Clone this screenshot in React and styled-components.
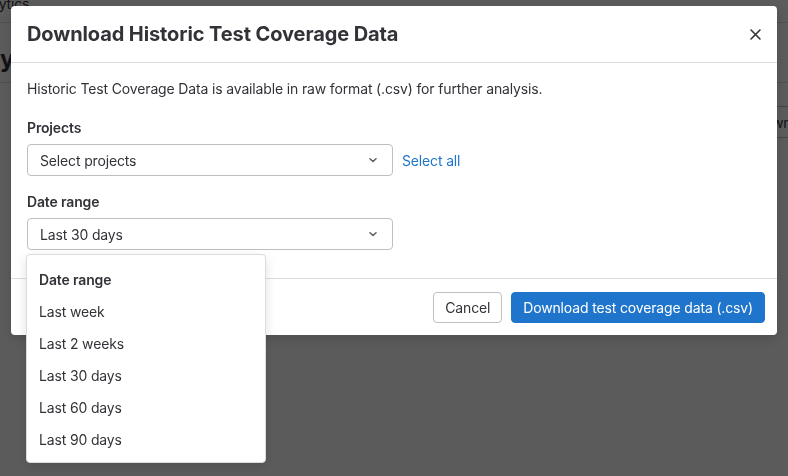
import React, { useState } from 'react';
import styled, { createGlobalStyle } from 'styled-components';

const GlobalStyle = createGlobalStyle`
  * { box-sizing: border-box; }
  html, body {
    margin: 0;
    padding: 0;
    font-family: Inter, "Noto Sans", "Liberation Sans", sans-serif;
    font-size: 14px;
    letter-spacing: -0.15px;
    color: #333238;
  }
`;

const ranges = ['Last week', 'Last 2 weeks', 'Last 30 days', 'Last 60 days', 'Last 90 days'];

function Chevron() {
  return (
    <svg width="16" height="16" viewBox="0 0 16 16" fill="none">
      <path d="M5 6.75 L8 9.5 L11 6.75" stroke="#626168" strokeWidth="1.6" strokeLinecap="round" strokeLinejoin="round" />
    </svg>
  );
}

function CloseIcon() {
  return (
    <svg width="16" height="16" viewBox="0 0 16 16" fill="none">
      <path d="M2.5 2.5 L13.5 13.5 M13.5 2.5 L2.5 13.5" stroke="#333238" strokeWidth="2" strokeLinecap="round" />
    </svg>
  );
}

export default function App() {
  const [range, setRange] = useState('Last 30 days');

  return (
    <>
      <GlobalStyle />
      <Page>
        <Breadcrumbs>
          <span>Analytics</span>
        </Breadcrumbs>
        <PageTitle>
          <h1>Analytics</h1>
        </PageTitle>
        <Toolbar>
          <GhostButton>Download historic test coverage data</GhostButton>
        </Toolbar>
      </Page>

      <Backdrop />

      <Modal>
        <ModalHeader>
          <h2>Download Historic Test Coverage Data</h2>
          <CloseButton aria-label="Close"><CloseIcon /></CloseButton>
        </ModalHeader>

        <ModalBody>
          <Intro>Historic Test Coverage Data is available in raw format (.csv) for further analysis.</Intro>

          <FormGroup>
            <Label>Projects</Label>
            <FieldRow>
              <Select>
                <span>Select projects</span>
                <Chevron />
              </Select>
              <LinkButton>Select all</LinkButton>
            </FieldRow>
          </FormGroup>

          <FormGroup>
            <Label>Date range</Label>
            <FieldRow>
              <Select>
                <span>{range}</span>
                <Chevron />
              </Select>
              <Menu>
                <MenuHeader>Date range</MenuHeader>
                {ranges.map((r) => (
                  <MenuItem key={r} onClick={() => setRange(r)}>{r}</MenuItem>
                ))}
              </Menu>
            </FieldRow>
          </FormGroup>
        </ModalBody>

        <ModalFooter>
          <Button>Cancel</Button>
          <Button $primary>Download test coverage data (.csv)</Button>
        </ModalFooter>
      </Modal>
    </>
  );
}

const Page = styled.div`
  width: 100vw;
  height: 100vh;
  overflow: hidden;
  background: #ffffff;
`;

const Breadcrumbs = styled.div`
  height: 29px;
  border-bottom: 1px solid #dcdcde;
  span {
    display: block;
    margin: -6px 0 0 -30px;
    line-height: 20px;
    font-size: 14px;
    color: #333238;
  }
`;

const PageTitle = styled.div`
  height: 60px;
  border-bottom: 1px solid #dcdcde;
  display: flex;
  align-items: center;
  h1 {
    margin: 12px 0 0 -53px;
    font-size: 24px;
    font-weight: 700;
    color: #333238;
  }
`;

const Toolbar = styled.div`
  display: flex;
  padding: 23px 0 0 741px;
  white-space: nowrap;
`;

const GhostButton = styled.div`
  flex-shrink: 0;
  height: 32px;
  padding: 0 12px;
  border: 1px solid #bfbfc3;
  border-radius: 4px;
  display: flex;
  align-items: center;
  font-size: 14px;
  color: #333238;
`;

const Backdrop = styled.div`
  position: fixed;
  inset: 0;
  background: rgba(0, 0, 0, 0.645);
`;

const Modal = styled.div`
  position: fixed;
  top: 6px;
  left: 11px;
  width: 766px;
  background: #ffffff;
  border-radius: 4px;
  box-shadow: 0 4px 12px rgba(0, 0, 0, 0.16);
`;

const ModalHeader = styled.div`
  height: 57px;
  padding: 0 16px;
  border-bottom: 1px solid #dcdcde;
  display: flex;
  align-items: center;
  justify-content: space-between;
  h2 {
    margin: 0;
    font-size: 20px;
    font-weight: 700;
    color: #333238;
    letter-spacing: -0.1px;
  }
`;

const CloseButton = styled.button`
  width: 28px;
  height: 28px;
  margin-right: -8px;
  padding: 0;
  border: none;
  background: none;
  display: flex;
  align-items: center;
  justify-content: center;
  svg { width: 13px; height: 13px; }
`;

const ModalBody = styled.div`
  padding: 16px 16px 12px;
`;

const Intro = styled.p`
  margin: 0 0 19px;
  line-height: 20px;
  font-size: 14px;
  color: #333238;
`;

const FormGroup = styled.div`
  margin-bottom: 16px;
`;

const Label = styled.div`
  margin-bottom: 6px;
  line-height: 20px;
  font-size: 14px;
  font-weight: 600;
  color: #333238;
`;

const FieldRow = styled.div`
  position: relative;
  display: flex;
  align-items: center;
  gap: 9px;
`;

const Select = styled.div`
  width: 366px;
  height: 32px;
  padding: 0 11px 0 12px;
  border: 1px solid #bfbfc3;
  border-radius: 4px;
  display: flex;
  align-items: center;
  justify-content: space-between;
  font-size: 14px;
  color: #333238;
`;

const LinkButton = styled.span`
  font-size: 14px;
  color: #1f75cb;
  cursor: pointer;
`;

const Menu = styled.div`
  position: absolute;
  top: 36px;
  left: -1px;
  width: 240px;
  padding: 0 0 7px;
  background: #ffffff;
  border: 1px solid #dcdcde;
  border-radius: 4px;
  box-shadow: 0 4px 12px rgba(0, 0, 0, 0.12);
  z-index: 2;
`;

const MenuHeader = styled.div`
  padding: 15px 12px 5px;
  line-height: 20px;
  font-size: 14px;
  font-weight: 600;
  color: #333238;
`;

const MenuItem = styled.div`
  height: 32px;
  padding: 0 12px;
  display: flex;
  align-items: center;
  font-size: 14px;
  color: #333238;
  cursor: pointer;
`;

const ModalFooter = styled.div`
  padding: 13px 12px 12px;
  border-top: 1px solid #dcdcde;
  display: flex;
  justify-content: flex-end;
  gap: 9px;
`;

const Button = styled.button`
  height: 31px;
  padding: 0 11px;
  border-radius: 4px;
  border: 1px solid ${(p) => (p.$primary ? '#1f75cb' : '#bfbfc3')};
  background: ${(p) => (p.$primary ? '#1f75cb' : '#ffffff')};
  color: ${(p) => (p.$primary ? '#ffffff' : '#333238')};
  font-family: inherit;
  font-size: 14px;
  letter-spacing: inherit;
`;
